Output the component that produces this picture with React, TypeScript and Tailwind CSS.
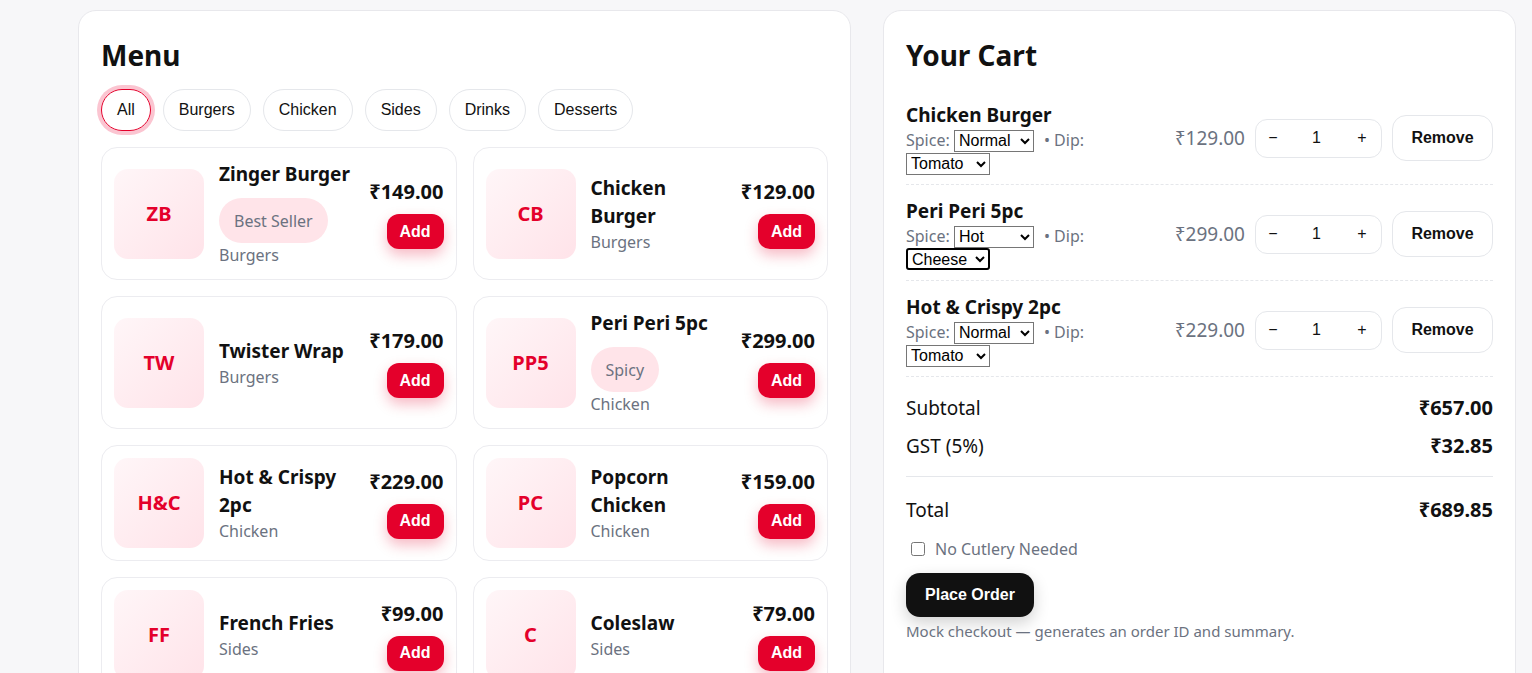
import { useState } from 'react';

type MenuItem = {
  code: string;
  name: string;
  category: string;
  price: number;
  badge?: string;
};

type CartLine = {
  name: string;
  price: number;
  qty: number;
  spice: string;
  dip: string;
};

const menu: MenuItem[] = [
  { code: 'ZB', name: 'Zinger Burger', category: 'Burgers', price: 149, badge: 'Best Seller' },
  { code: 'CB', name: 'Chicken Burger', category: 'Burgers', price: 129 },
  { code: 'TW', name: 'Twister Wrap', category: 'Burgers', price: 179 },
  { code: 'PP5', name: 'Peri Peri 5pc', category: 'Chicken', price: 299, badge: 'Spicy' },
  { code: 'H&C', name: 'Hot & Crispy 2pc', category: 'Chicken', price: 229 },
  { code: 'PC', name: 'Popcorn Chicken', category: 'Chicken', price: 159 },
  { code: 'FF', name: 'French Fries', category: 'Sides', price: 99 },
  { code: 'C', name: 'Coleslaw', category: 'Sides', price: 79 },
];

const categories = ['All', 'Burgers', 'Chicken', 'Sides', 'Drinks', 'Desserts'];

const initialCart: CartLine[] = [
  { name: 'Chicken Burger', price: 129, qty: 1, spice: 'Normal', dip: 'Tomato' },
  { name: 'Peri Peri 5pc', price: 299, qty: 1, spice: 'Hot', dip: 'Cheese' },
  { name: 'Hot & Crispy 2pc', price: 229, qty: 1, spice: 'Normal', dip: 'Tomato' },
];

const rupee = (n: number) => '₹' + n.toFixed(2);

const sans = "font-['Noto_Sans','DejaVu_Sans',sans-serif]";
const arial = "font-['Liberation_Sans',Arial,sans-serif]";

function MenuCard({ item }: { item: MenuItem }) {
  return (
    <div className="flex items-center gap-[15px] rounded-2xl border border-[#ececf0] bg-white p-3">
      <div className="flex h-[90px] w-[90px] shrink-0 items-center justify-center rounded-[14px] bg-gradient-to-br from-[#fff6f8] to-[#ffe3e9]">
        <span className="text-[20px] font-bold text-[#e4002b]">{item.code}</span>
      </div>
      <div className="min-w-0 flex-1">
        <div className="text-[19px] font-bold leading-7 text-[#111]">{item.name}</div>
        {item.badge && (
          <span className="mt-[10px] inline-flex h-[45px] items-center rounded-full bg-[#ffe4e9] px-[15px] text-[16px] text-[#6b7280]">
            {item.badge}
          </span>
        )}
        <div className="text-[16px] leading-6 text-[#6b7280]">{item.category}</div>
      </div>
      <div className="flex shrink-0 flex-col items-end gap-2">
        <div className="text-[20px] font-bold leading-7 text-[#111]">{rupee(item.price)}</div>
        <button
          className={`${arial} h-[35px] w-[57px] rounded-xl bg-[#e4002b] text-[16px] font-bold text-white shadow-[0_6px_14px_rgba(228,0,43,0.28)]`}
        >
          Add
        </button>
      </div>
    </div>
  );
}

export default function App() {
  const [active, setActive] = useState('All');
  const [cart, setCart] = useState<CartLine[]>(initialCart);
  const [noCutlery, setNoCutlery] = useState(false);

  const subtotal = cart.reduce((s, l) => s + l.price * l.qty, 0);
  const gst = subtotal * 0.05;

  const updateLine = (i: number, patch: Partial<CartLine>) => {
    setCart(c => c.map((l, idx) => (idx === i ? { ...l, ...patch } : l)));
  };

  return (
    <div className={`${sans} min-h-screen bg-[#f7f7f9] pl-[78px] pr-4 pt-[10px] text-[#111]`}>
      <div className="flex gap-8">
        {/* Menu */}
        <section className="w-[773px] shrink-0 rounded-[18px] border border-[#e8e8ec] bg-white px-[22px] pb-[22px] pt-[24px]">
          <h2 className="mb-[14px] text-[28px] font-bold leading-[40px]">Menu</h2>

          <div className="mb-4 flex gap-3">
            {categories.map(c => (
              <button
                key={c}
                onClick={() => setActive(c)}
                className={`${arial} h-[42px] rounded-full border px-[15px] text-[16px] text-[#111] ${
                  active === c
                    ? 'border-[#e4002b] ring-4 ring-[#fbc5d1]'
                    : 'border-[#e5e7eb] bg-white'
                }`}
              >
                {c}
              </button>
            ))}
          </div>

          <div className="grid grid-cols-2 gap-4">
            {menu
              .filter(m => active === 'All' || m.category === active)
              .map(m => (
                <MenuCard key={m.code} item={m} />
              ))}
          </div>
        </section>

        {/* Cart */}
        <aside className="w-[633px] shrink-0 rounded-[18px] border border-[#e8e8ec] bg-white px-[22px] pb-[22px] pt-[24px]">
          <h2 className="mb-[14px] text-[28px] font-bold leading-[40px]">Your Cart</h2>

          <div>
            {cart.map((line, i) => (
              <div
                key={line.name}
                className="flex items-center gap-[10px] border-b border-dashed border-[#e5e7eb] pb-[9px] pt-3"
              >
                <div className="min-w-0 flex-1">
                  <div className="text-[19px] font-bold leading-7">{line.name}</div>
                  <div className="text-[16px] leading-[23px] text-[#6b7280]">
                    Spice:{' '}
                    <select
                      value={line.spice}
                      onChange={e => updateLine(i, { spice: e.target.value })}
                      className={`${arial} h-[22px] w-[80px] border border-[#767676] text-[16px] text-black`}
                    >
                      <option>Normal</option>
                      <option>Hot</option>
                      <option>Mild</option>
                    </select>
                    <span className="ml-[10px] mr-[6px]">• Dip:</span>{' '}
                    <select
                      value={line.dip}
                      onChange={e => updateLine(i, { dip: e.target.value })}
                      className={`${arial} h-[22px] w-[84px] text-[16px] text-black ${
                        i === 1
                          ? 'rounded-[3px] border-2 border-black'
                          : 'border border-[#767676]'
                      }`}
                    >
                      <option>Tomato</option>
                      <option>Cheese</option>
                      <option>Mayo</option>
                    </select>
                  </div>
                </div>

                <div className="text-[19px] text-[#6b7280]">{rupee(line.price)}</div>

                <div className={`${arial} flex h-[39px] w-[127px] items-center rounded-xl border border-[#e5e7eb] text-[16px]`}>
                  <button
                    className="h-full w-[34px]"
                    onClick={() => updateLine(i, { qty: Math.max(1, line.qty - 1) })}
                  >
                    −
                  </button>
                  <input
                    value={line.qty}
                    readOnly
                    className="w-[53px] bg-transparent text-center"
                  />
                  <button
                    className="h-full w-[38px]"
                    onClick={() => updateLine(i, { qty: line.qty + 1 })}
                  >
                    +
                  </button>
                </div>

                <button
                  onClick={() => setCart(c => c.filter((_, idx) => idx !== i))}
                  className={`${arial} h-[46px] w-[101px] rounded-[14px] border border-[#e5e7eb] bg-white text-[16px] font-bold`}
                >
                  Remove
                </button>
              </div>
            ))}
          </div>

          {/* Totals */}
          <div className="mt-[17px] space-y-[10px] text-[19px] leading-7">
            <div className="flex justify-between">
              <span>Subtotal</span>
              <span className="text-[20px] font-bold">{rupee(subtotal)}</span>
            </div>
            <div className="flex justify-between">
              <span>GST (5%)</span>
              <span className="text-[20px] font-bold">{rupee(gst)}</span>
            </div>
          </div>
          <div className="mt-4 border-t border-[#e5e7eb]" />
          <div className="mt-[19px] flex justify-between text-[19px] leading-7">
            <span>Total</span>
            <span className="text-[20px] font-bold">{rupee(subtotal + gst)}</span>
          </div>

          <label className="mt-[13px] flex items-center text-[16px] leading-6 text-[#6b7280]">
            <input
              type="checkbox"
              checked={noCutlery}
              onChange={e => setNoCutlery(e.target.checked)}
              className="ml-[5px] mr-[10px] h-[14px] w-[14px]"
            />
            No Cutlery Needed
          </label>

          <button
            className={`${arial} mt-3 h-[44px] w-[128px] rounded-[14px] bg-[#111] text-[16px] font-bold text-white shadow-[0_6px_16px_rgba(0,0,0,0.18)]`}
          >
            Place Order
          </button>
          <p className="mt-1 text-[15px] leading-5 text-[#6b7280]">
            Mock checkout — generates an order ID and summary.
          </p>
        </aside>
      </div>
    </div>
  );
}
